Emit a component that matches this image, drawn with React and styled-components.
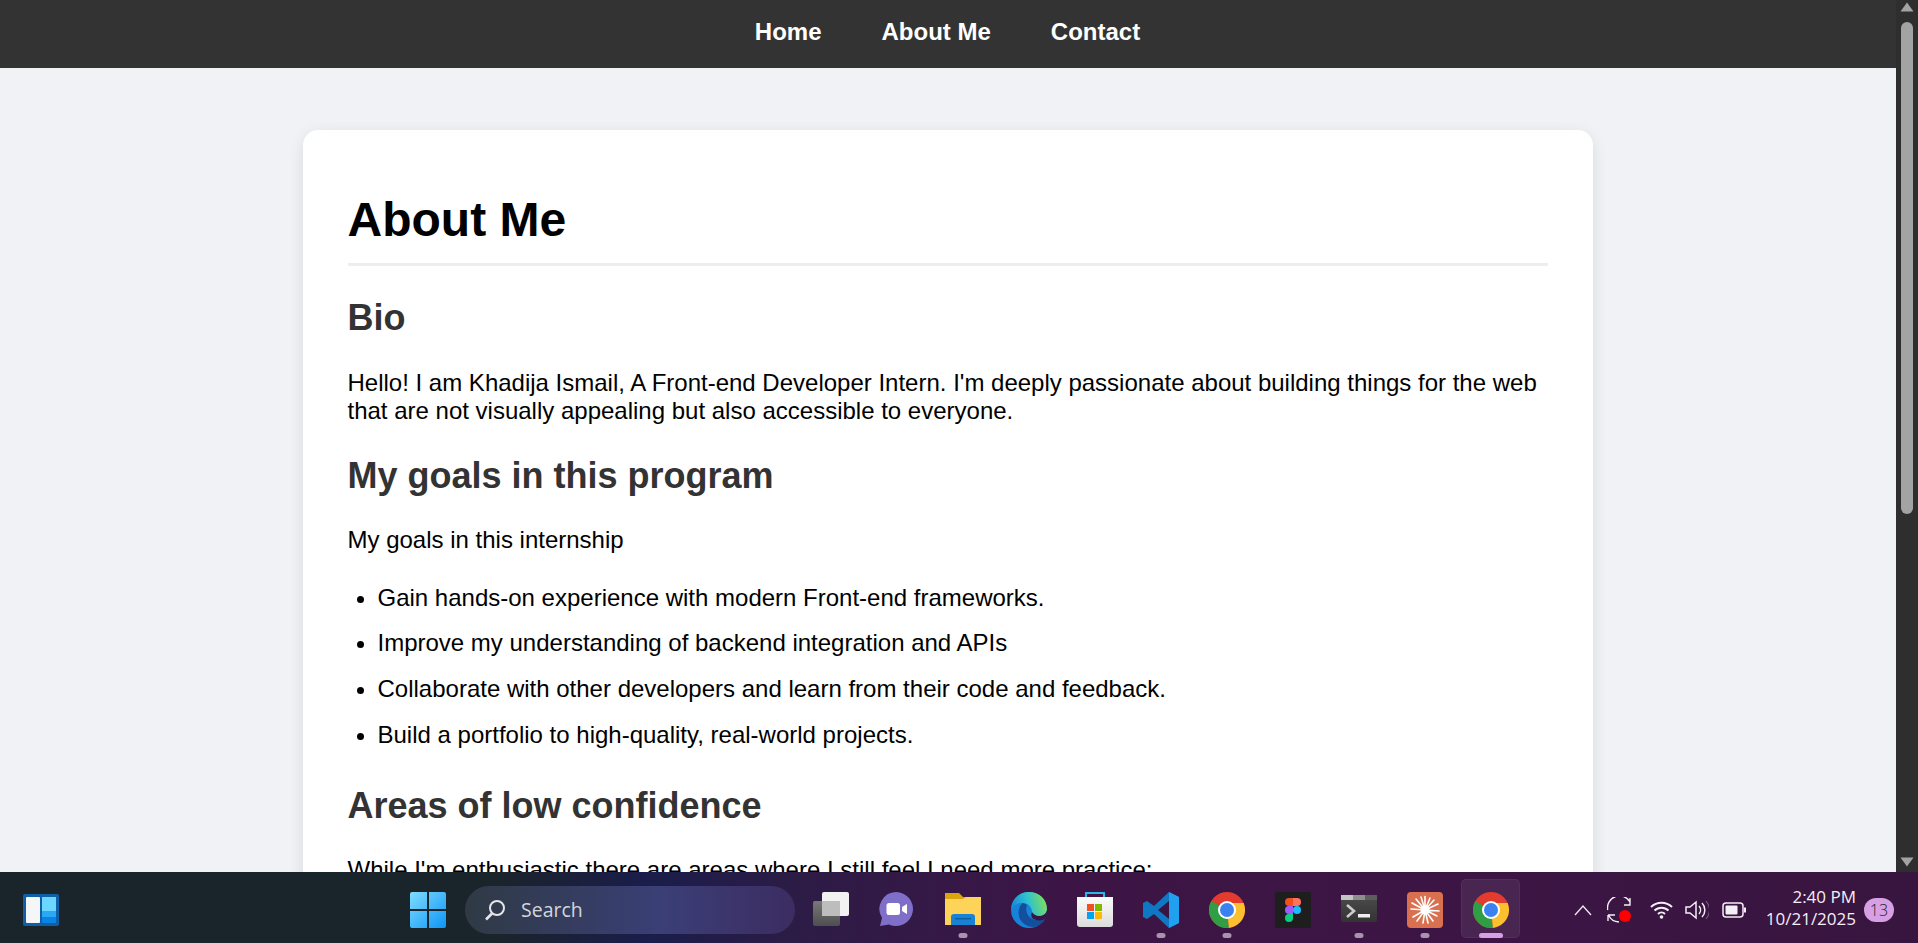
import React from "react";
import styled, { createGlobalStyle } from "styled-components";

const Global = createGlobalStyle`
  html, body { margin: 0; padding: 0; height: 100%; overflow: hidden; }
  body { font-family: "Liberation Sans", Arial, sans-serif; background: #f0f2f5; }
  #root { height: 100%; }
`;
const Screen = styled.div`
  height: 943px; display: flex; flex-direction: column; overflow: hidden;
`;
const Viewport = styled.div`
  height: 872px; display: flex; overflow: hidden; flex: none;
`;
const Page = styled.div`
  flex: 1; min-width: 0; background: #f0f2f5; overflow: hidden;
`;
const Nav = styled.nav`
  height: 68px; background: #333; display: flex; justify-content: center; gap: 60px; padding: 18px 1px 0 0; box-sizing: border-box;
`;
const NavLink = styled.a`
  color: #fff; font-weight: 700; font-size: 24px; line-height: 28px;
`;
const Card = styled.main`
  width: 1200px; margin: 62px auto 0; padding: 62px 45.5px 45px 44.5px; background: #fff; border-radius: 15px;
  box-shadow: 0 4px 15px rgba(0,0,0,.1);
`;
const Title = styled.h1`
  margin: 0 0 31px; font-size: 48px; line-height: 55px; font-weight: 700; color: #000;
  border-bottom: 3px solid #eee; padding-bottom: 16px;
`;
const Heading = styled.h2`
  margin: 0 0 30.6px; font-size: 36px; line-height: 41px; font-weight: 700; color: #333;
`;
const Para = styled.p`
  margin: 0 0 28.5px; font-size: 24px; line-height: 28.8px; color: #000;
`;
const List = styled.ul`
  margin: 0.4px 0 35px; padding: 0 0 0 30px; font-size: 24px; line-height: 28.8px;
`;
const Item = styled.li`
  margin-bottom: 17px;
`;
const Scrollbar = styled.div`
  width: 22px; flex: none; background: #2e2e2e; display: flex; flex-direction: column; align-items: center; padding-top: 2px; box-sizing: border-box;
`;
const Arrow = styled.svg`
  width: 14px; height: 10px; display: block; flex: none;
`;
const Thumb = styled.div`
  width: 12px; height: 492px; margin-top: 10px; background: #a3a3a3; border-radius: 6px; flex: none;
`;
const Spring = styled.div`
  flex: 1;
`;
const ArrowDown = styled(Arrow)`
  margin-bottom: 5px;
`;
const Taskbar = styled.footer`
  height: 71px; flex: none; display: flex; align-items: center; color: #fff; padding-top: 4px; box-sizing: border-box;
  font-family: "Open Sans", "Noto Sans", sans-serif;
  background: linear-gradient(90deg, #1a242b 0%, #1a242b 26%, #1a1d4a 33.500%, #2d1c45 42%, #3c1546 55%, #3d1545 75%, #38153f 100%);
`;
const Widget = styled.div`
  width: 36px; height: 32px; margin-left: 23px; flex: none; display: flex;
`;
const Start = styled.div`
  width: 36px; height: 36px; margin-left: 351px; flex: none;
`;
const Search = styled.div`
  width: 330px; height: 48px; margin-left: 19px; border-radius: 24px; flex: none; display: flex; align-items: center;
  padding-left: 19px; box-sizing: border-box; gap: 15px; font-size: 19.5px; color: #d4d6da;
  background: linear-gradient(90deg, #2f3a45, #3a3f76 60%, #3c2c62);
`;
const Apps = styled.div`
  display: flex; gap: 30px; margin-left: 18px; flex: none;
`;
const App_ = styled.div`
  width: 36px; height: 36px; position: relative; flex: none;
`;
const Active = styled.div`
  position: absolute; left: -12px; top: -13px; width: 59px; height: 59px; border-radius: 5px;
  background: rgba(255,255,255,.07); border: 1px solid rgba(255,255,255,.05); box-sizing: border-box;
`;
const Dot = styled.span`
  position: absolute; top: 41px; left: 50%; height: 5px; border-radius: 3px; transform: translateX(-50%);
  width: ${p => (p.$on ? 24 : 9)}px; background: ${p => (p.$on ? "#d8a0e4" : "#a892ad")};
`;
const Glyph = styled.svg`
  position: relative; width: 36px; height: 36px; display: block;
`;
const Tray = styled.div`
  display: flex; align-items: center; margin-left: 65px; flex: none;
`;
const TrayIcon = styled.svg`
  display: block; flex: none; margin-right: ${p => p.$gap}px;
`;
const Clock = styled.div`
  width: 108px; margin: 0 0 4px 2px; text-align: right; font-size: 17px; line-height: 22px; color: #f4eef6;
`;
const Badge = styled.div`
  width: 30px; height: 24px; margin-left: 8px; border-radius: 12px; background: #d8a0e4; color: #222;
  display: flex; align-items: center; justify-content: center; font-size: 16px; font-weight: 300;
`;

const Chrome = () => (
  <Glyph viewBox="0 0 36 36">
    <circle cx="18" cy="18" r="18" fill="#e33b2e" />
    <path d="M18 18 L2.400 9 A18 18 0 0 0 20 35.900 Z" fill="#2f9e44" />
    <path d="M18 18 L20 35.900 A18 18 0 0 0 34.600 11 L18 11 Z" fill="#fbc02d" />
    <circle cx="18" cy="18" r="9" fill="#fff" />
    <circle cx="18" cy="18" r="7" fill="#3b82f0" />
  </Glyph>
);

const icons = [
  <Glyph viewBox="0 0 36 36" key="tv">
    <defs>
      <linearGradient id="tvBack" x1="0" y1="0" x2="0" y2="1">
        <stop offset="0" stopColor="#787878" />
        <stop offset="1" stopColor="#4e4e4e" />
      </linearGradient>
    </defs>
    <rect x="0" y="9" width="27" height="25" rx="2" fill="url(#tvBack)" />
    <rect x="9" y="0" width="27" height="24" rx="2" fill="#f2f2f2" />
    <rect x="9" y="9" width="18" height="15" fill="#bdbdbd" />
  </Glyph>,
  <Glyph viewBox="0 0 36 36" key="chat">
    <path d="M17 0a17 17 0 1 1-7 32.500L1 34l2-8A17 17 0 0 1 17 0z" fill="#7f6fc8" />
    <rect x="7.500" y="11" width="13.500" height="12" rx="2.500" fill="#fff" />
    <path d="M23 15l5-3v10l-5-3z" fill="#fff" />
  </Glyph>,
  <Glyph viewBox="0 0 36 36" key="folder">
    <path d="M0 1h14l4 4h18v28H0z" fill="#dca50e" />
    <path d="M0 7h18l3-2h15v27a1 1 0 0 1-1 1H1a1 1 0 0 1-1-1z" fill="#fdd35a" />
    <path d="M6 33V25a3 3 0 0 1 3-3h18a3 3 0 0 1 3 3v8z" fill="#1a82d4" />
    <rect x="10" y="26" width="16" height="1.500" fill="#0b5ea8" />
  </Glyph>,
  <Glyph viewBox="0 0 36 36" key="edge">
    <defs>
      <linearGradient id="edgeTop" x1="0" y1="0.700" x2="1" y2="0.500">
        <stop offset="0" stopColor="#1585d8" />
        <stop offset="0.500" stopColor="#2cc0d2" />
        <stop offset="1" stopColor="#7ede5c" />
      </linearGradient>
    </defs>
    <circle cx="18" cy="18" r="18" fill="#1683d8" />
    <path d="M0 17C1 6 9 0 18 0c10 0 18 7 18 17 0 4-3 7-8 7-4 0-7-2-7-4 0-5-4-9-9-9-5 0-10 2-12 6z" fill="url(#edgeTop)" />
    <path d="M12 11c-4 3-5 8-4 13 1 6 7 11 15 11 5-1 9-4 12-9-3 2-9 3-14 1-5-3-7-9-5-14-1-1-3-2-4-2z" fill="#134f9c" />
    <path d="M21 20c1 2 4 4 7 4 4 0 7-2 8-6v2c0 3-1 5-2 7-3 2-9 2-13-1-1-2-1-4 0-6z" fill="#3a1544" />
  </Glyph>,
  <Glyph viewBox="0 0 36 36" key="store">
    <defs>
      <linearGradient id="storeBody" x1="0" y1="0" x2="0" y2="1">
        <stop offset="0" stopColor="#fbfbfb" />
        <stop offset="1" stopColor="#dcdcdc" />
      </linearGradient>
    </defs>
    <path d="M9 6V1h18v5" fill="none" stroke="#2fb4e8" strokeWidth="2" />
    <path d="M0 5h36v27a3 3 0 0 1-3 3H3a3 3 0 0 1-3-3z" fill="url(#storeBody)" />
    <rect x="10" y="12" width="7" height="7" fill="#f25022" />
    <rect x="18" y="12" width="7" height="7" fill="#7fba00" />
    <rect x="10" y="20" width="7" height="7" fill="#00a4ef" />
    <rect x="18" y="20" width="7" height="7" fill="#ffb900" />
  </Glyph>,
  <Glyph viewBox="0 0 36 36" key="code">
    <path d="M26 0L11 14 4 9l-4 2v14l4 2 7-5 15 14 10-5V5z" fill="#0e78c4" />
    <path d="M26 9L15 18l11 9z" fill="#3a1544" />
    <path d="M26 0l10 5v26l-10 5V27 9z" fill="#22a0f0" />
  </Glyph>,
  <Chrome key="c1" />,
  <Glyph viewBox="0 0 36 36" key="figma">
    <rect width="36" height="36" rx="2" fill="#1e1e1e" />
    <path d="M18 6h-4a4 4 0 0 0 0 8h4z" fill="#f24e1e" />
    <path d="M18 6h4a4 4 0 0 1 0 8h-4z" fill="#ff7262" />
    <path d="M18 14h-4a4 4 0 0 0 0 8h4z" fill="#a259ff" />
    <circle cx="22" cy="18" r="4" fill="#1abcfe" />
    <path d="M14 22h4v4a4 4 0 1 1-4-4z" fill="#0acf83" />
  </Glyph>,
  <Glyph viewBox="0 0 36 36" key="term">
    <defs>
      <linearGradient id="termBody" x1="0" y1="0" x2="0" y2="1">
        <stop offset="0" stopColor="#4c4c4c" />
        <stop offset="1" stopColor="#333" />
      </linearGradient>
    </defs>
    <rect y="3" width="36" height="27" rx="2" fill="url(#termBody)" />
    <rect y="3" width="12" height="5" fill="#c4c4c4" />
    <rect x="12" y="3" width="12" height="5" fill="#8e8e8e" />
    <rect x="24" y="3" width="12" height="5" fill="#5d5d5d" />
    <path d="M6 13l7 6-7 6" fill="none" stroke="#ccc" strokeWidth="2.600" />
    <rect x="17" y="22" width="12" height="3.500" fill="#eee" />
  </Glyph>,
  <Glyph viewBox="0 0 36 36" key="claude">
    <rect width="36" height="36" rx="4" fill="#d9704f" />
    <g stroke="#fff" strokeWidth="1.600" strokeLinecap="round">
      <path d="M18 18L18 4.500M18 18L23 6M18 18L27 8M18 18L31 12M18 18L32 19M18 18L30 24M18 18L26 29M18 18L21 31M18 18L16 31M18 18L10 29M18 18L6 25M18 18L4 17M18 18L5 11M18 18L9 7M18 18L14 5" />
    </g>
    <circle cx="18" cy="18" r="4.500" fill="#fff" />
  </Glyph>,
];
const dots = [false, false, true, false, false, true, true, false, true, true];

export default function App() {
  return (
    <Screen>
      <Global />
      <Viewport>
        <Page>
          <Nav>
            <NavLink>Home</NavLink>
            <NavLink>About Me</NavLink>
            <NavLink>Contact</NavLink>
          </Nav>
          <Card>
            <Title>About Me</Title>
            <Heading>Bio</Heading>
            <Para>Hello! I am Khadija Ismail, A Front-end Developer Intern. I'm deeply passionate about building things for the web that are not visually appealing but also accessible to everyone.</Para>
            <Heading>My goals in this program</Heading>
            <Para>My goals in this internship</Para>
            <List>
              <Item>Gain hands-on experience with modern Front-end frameworks.</Item>
              <Item>Improve my understanding of backend integration and APIs</Item>
              <Item>Collaborate with other developers and learn from their code and feedback.</Item>
              <Item>Build a portfolio to high-quality, real-world projects.</Item>
            </List>
            <Heading>Areas of low confidence</Heading>
            <Para>While I'm enthusiastic there are areas where I still feel I need more practice:</Para>
          </Card>
        </Page>
        <Scrollbar>
          <Arrow viewBox="0 0 14 10"><path d="M7 0.500L13.500 9.500H0.500z" fill="#a3a3a3" /></Arrow>
          <Thumb />
          <Spring />
          <ArrowDown viewBox="0 0 14 10"><path d="M7 9.500L13.500 0.500H0.500z" fill="#a3a3a3" /></ArrowDown>
        </Scrollbar>
      </Viewport>
      <Taskbar>
        <Widget>
          <svg width="36" height="32" viewBox="0 0 36 32">
            <rect width="36" height="32" rx="2" fill="#0f5ea8" />
            <rect x="3" y="3" width="14" height="26" rx="1" fill="#f4f6f8" />
            <rect x="19" y="3" width="14" height="14" fill="#6bd6ff" />
            <rect x="19" y="17" width="14" height="6" fill="#2ba8f4" />
            <rect x="19" y="23" width="14" height="6" fill="#0a84e4" />
          </svg>
        </Widget>
        <Start>
          <svg width="36" height="36" viewBox="0 0 36 36">
            <defs>
              <linearGradient id="winG" x1="0" y1="0" x2="1" y2="1">
                <stop offset="0" stopColor="#7fdcff" />
                <stop offset="1" stopColor="#0d95f5" />
              </linearGradient>
            </defs>
            <path d="M0 2a2 2 0 0 1 2-2h15v17H0zM19 0h15a2 2 0 0 1 2 2v15H19zM0 19h17v17H2a2 2 0 0 1-2-2zM19 19h17v15a2 2 0 0 1-2 2H19z" fill="url(#winG)" />
          </svg>
        </Start>
        <Search>
          <svg width="22" height="22" viewBox="0 0 22 22" fill="none" stroke="#e4e6e8" strokeWidth="2">
            <circle cx="13" cy="9" r="7" />
            <path d="M8 14.500L2 20.500" strokeWidth="2.600" />
          </svg>
          Search
        </Search>
        <Apps>
          {icons.map((g, i) => (
            <App_ key={i}>
              {g}
              {dots[i] && <Dot />}
            </App_>
          ))}
          <App_>
            <Active />
            <Chrome />
            <Dot $on />
          </App_>
        </Apps>
        <Tray>
          <TrayIcon $gap={15} width="18" height="12" viewBox="0 0 18 12" fill="none" stroke="#f0e8f2" strokeWidth="1.300">
            <path d="M1 11L9 2l8 9" />
          </TrayIcon>
          <TrayIcon $gap={19} width="24" height="26" viewBox="0 0 24 26" fill="none" stroke="#f4eef6" strokeWidth="1.400">
            <path d="M0.700 13A12 12 0 0 1 23 5M23 1V8H17M1 18H8M1 18V24M1.500 18A12 12 0 0 0 12 25" />
            <circle cx="18" cy="19" r="6" fill="#f00" stroke="none" />
          </TrayIcon>
          <TrayIcon $gap={12} width="23" height="18" viewBox="0 0 23 18" fill="none" stroke="#f4eef6" strokeWidth="2">
            <path d="M1 6a15 15 0 0 1 21 0M4.500 9.500a10 10 0 0 1 14 0M8 13a5 5 0 0 1 7 0" />
            <circle cx="11.500" cy="16" r="1.800" fill="#f4eef6" stroke="none" />
          </TrayIcon>
          <TrayIcon $gap={13} width="24" height="20" viewBox="0 0 24 20" fill="none" stroke="#f4eef6" strokeWidth="1.500">
            <path d="M1 7h4l6-5v16l-6-5H1zM14 6a6 6 0 0 1 0 8M17 3a10 10 0 0 1 0 14" />
            <path d="M21 1a13 13 0 0 1 0 18" stroke="#8a6c8f" strokeWidth="1" />
          </TrayIcon>
          <TrayIcon $gap={0} width="24" height="16" viewBox="0 0 24 16">
            <rect x="1" y="1" width="20" height="14" rx="3" fill="none" stroke="#f4eef6" strokeWidth="1.500" />
            <rect x="3.500" y="3.500" width="12" height="9" rx="1" fill="#f4eef6" />
            <rect x="22" y="5.500" width="2" height="5" fill="#f4eef6" />
          </TrayIcon>
          <Clock>2:40 PM<br />10/21/2025</Clock>
          <Badge>13</Badge>
        </Tray>
      </Taskbar>
    </Screen>
  );
}
